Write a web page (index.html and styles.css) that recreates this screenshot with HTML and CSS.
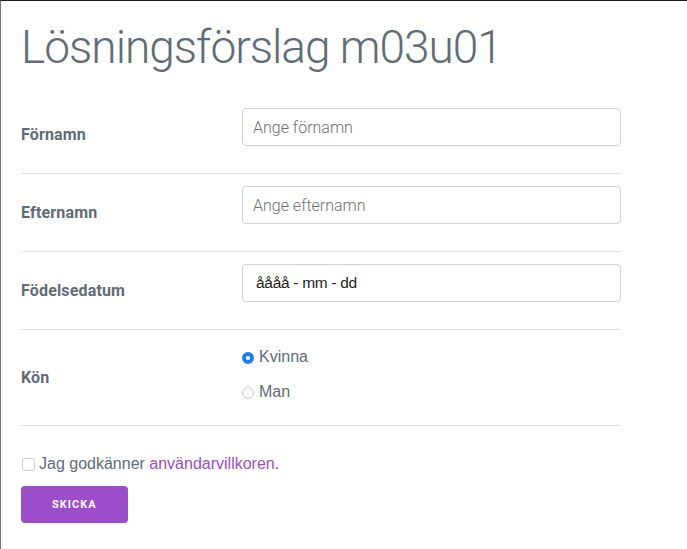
FILE: index.html
```html
<!DOCTYPE html>
<html lang="sv">
<head>
<meta charset="utf-8">
<title>Lösningsförslag m03u01</title>
<link rel="stylesheet" href="styles.css">
</head>
<body>
<div class="container">
  <h1 class="title">Lösningsförslag m03u01</h1>
  <form class="form">
    <div class="row">
      <label class="row-label" for="fn">Förnamn</label>
      <div class="field"><input class="text-input" id="fn" type="text" placeholder="Ange förnamn"></div>
    </div>
    <div class="row">
      <label class="row-label" for="en">Efternamn</label>
      <div class="field"><input class="text-input" id="en" type="text" placeholder="Ange efternamn"></div>
    </div>
    <div class="row">
      <label class="row-label" for="dob">Födelsedatum</label>
      <div class="field"><input class="text-input date-input" id="dob" type="text" value="åååå - mm - dd"></div>
    </div>
    <div class="row">
      <span class="row-label">Kön</span>
      <div class="radios">
        <label class="choice"><input class="radio" type="radio" name="kon" checked>Kvinna</label>
        <label class="choice"><input class="radio" type="radio" name="kon">Man</label>
      </div>
    </div>
    <label class="terms"><input class="checkbox" type="checkbox"><span>Jag godkänner <a class="link" href="#">användarvillkoren</a>.</span></label>
    <button class="submit" type="button">Skicka</button>
  </form>
</div>
</body>
</html>
```
FILE: styles.css
```css
html, body {
  height: 100%;
}
body {
  margin: 0;
  box-sizing: border-box;
  border-top: 1px solid #1f1f1f;
  border-left: 1px solid #6f767d;
  background: #fff;
  color: #606c76;
  font-family: Roboto, "Liberation Sans", sans-serif;
  font-weight: 300;
  font-size: 16px;
  letter-spacing: .01em;
}
.container {
  padding: 19px 20px 0 20px;
}
.title {
  margin: 0 0 21px;
  font-size: 46px;
  font-weight: 300;
  line-height: 1.2;
  letter-spacing: -1px;
}
.form {
  width: 600px;
}
.row {
  display: grid;
  grid-template-columns: 221px 1fr;
  align-items: center;
  border-bottom: 1px solid #e1e1e1;
}
.row-label {
  font-size: 16px;
  font-weight: 700;
  color: #606c76;
}
.field {
  padding: 12px 0 27px;
}
.text-input {
  display: block;
  box-sizing: border-box;
  width: 100%;
  height: 38px;
  margin: 0;
  padding: 6px 10px;
  border: 1px solid #d1d1d1;
  border-radius: 4px;
  background: #fff;
  font-family: Roboto, sans-serif;
  font-weight: 300;
  font-size: 16px;
  color: #606c76;
  outline: none;
}
.text-input::placeholder {
  color: #6f6f6f;
  opacity: 1;
}
.date-input {
  padding-left: 13px;
  font-family: "Liberation Sans", Arial, sans-serif;
  font-weight: 400;
  font-size: 15.5px;
  color: #1e1e1e;
  letter-spacing: -0.3px;
}
.radios {
  display: flex;
  flex-direction: column;
  gap: 11px;
  padding: 15px 0 21px;
}
.choice {
  display: flex;
  align-items: center;
  gap: 5px;
  line-height: 24px;
  font-family: "Liberation Sans", Arial, sans-serif;
  font-weight: 400;
  font-size: 16px;
  letter-spacing: 0;
  color: #606c76;
}
.radio {
  appearance: none;
  -webkit-appearance: none;
  box-sizing: border-box;
  width: 12px;
  height: 12px;
  margin: 1px 0 0 0;
  border: 1px solid #c9c9c9;
  border-radius: 50%;
  background: #fbfbfb;
}
.radio:checked {
  border: 4px solid #1a7df6;
  background: #fff;
}
.terms {
  display: flex;
  align-items: center;
  gap: 4px;
  margin: 26px 0 10px;
  line-height: 24px;
  font-family: "Liberation Sans", Arial, sans-serif;
  font-weight: 400;
  font-size: 16px;
  letter-spacing: 0;
  color: #606c76;
}
.checkbox {
  appearance: none;
  -webkit-appearance: none;
  box-sizing: border-box;
  width: 13px;
  height: 13px;
  margin: 0 0 0 1px;
  border: 1px solid #cdcdcd;
  border-radius: 3px;
  background: #fff;
}
.link {
  color: #9b4dca;
  text-decoration: none;
}
.submit {
  display: block;
  height: 37px;
  padding: 0 31px;
  border: none;
  border-radius: 4px;
  background: #9b4dca;
  color: #fff;
  font-family: Roboto, sans-serif;
  font-size: 11px;
  font-weight: 700;
  letter-spacing: 1px;
  text-transform: uppercase;
  cursor: pointer;
}
```
